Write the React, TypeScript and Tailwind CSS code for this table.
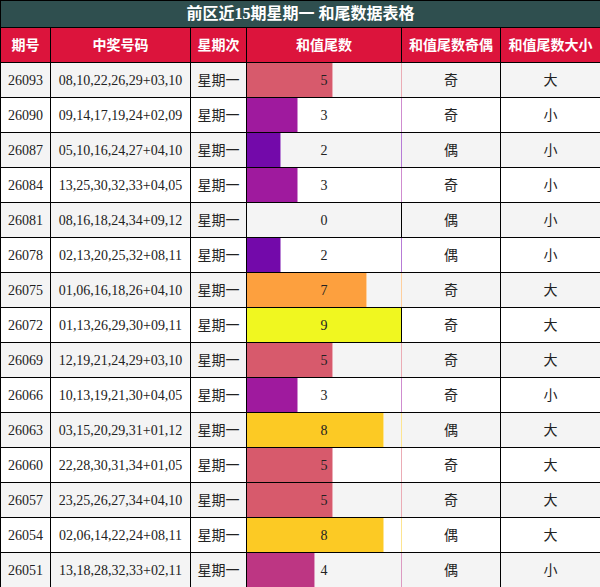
const rows = [
  { id: "26093", nums: "08,10,22,26,29+03,10", v: 5, oe: "奇", bs: "大" },
  { id: "26090", nums: "09,14,17,19,24+02,09", v: 3, oe: "奇", bs: "小" },
  { id: "26087", nums: "05,10,16,24,27+04,10", v: 2, oe: "偶", bs: "小" },
  { id: "26084", nums: "13,25,30,32,33+04,05", v: 3, oe: "奇", bs: "小" },
  { id: "26081", nums: "08,16,18,24,34+09,12", v: 0, oe: "偶", bs: "小" },
  { id: "26078", nums: "02,13,20,25,32+08,11", v: 2, oe: "偶", bs: "小" },
  { id: "26075", nums: "01,06,16,18,26+04,10", v: 7, oe: "奇", bs: "大" },
  { id: "26072", nums: "01,13,26,29,30+09,11", v: 9, oe: "奇", bs: "大" },
  { id: "26069", nums: "12,19,21,24,29+03,10", v: 5, oe: "奇", bs: "大" },
  { id: "26066", nums: "10,13,19,21,30+04,05", v: 3, oe: "奇", bs: "小" },
  { id: "26063", nums: "03,15,20,29,31+01,12", v: 8, oe: "偶", bs: "大" },
  { id: "26060", nums: "22,28,30,31,34+01,05", v: 5, oe: "奇", bs: "大" },
  { id: "26057", nums: "23,25,26,27,34+04,10", v: 5, oe: "奇", bs: "大" },
  { id: "26054", nums: "02,06,14,22,24+08,11", v: 8, oe: "偶", bs: "大" },
  { id: "26051", nums: "13,18,28,32,33+02,11", v: 4, oe: "偶", bs: "小" },
];

// bar colour and the light edge colour for each tail value
const bars: Record<number, { bar: string; edge: string }> = {
  0: { bar: "bg-transparent", edge: "border-r-black" },
  2: { bar: "bg-[#7309aa]", edge: "border-r-[#b77bd6]" },
  3: { bar: "bg-[#9f1a9e]", edge: "border-r-[#cf8ccf]" },
  4: { bar: "bg-[#bd3683]", edge: "border-r-[#dc9ac1]" },
  5: { bar: "bg-[#d75a6c]", edge: "border-r-[#ebacb5]" },
  7: { bar: "bg-[#fda03e]", edge: "border-r-[#fecf9e]" },
  8: { bar: "bg-[#fcca24]", edge: "border-r-[#fde491]" },
  9: { bar: "bg-[#f0f720]", edge: "border-r-black" },
};

const font = "font-['Liberation_Serif','Noto_Sans_CJK_SC',sans-serif]";

export default function App() {
  return (
    <div className="w-[600px] h-[587px] bg-white">
      <table className={`w-[600px] table-fixed border-collapse ${font} text-[14px] text-[#222]`}>
        <colgroup>
          <col className="w-[50px]" />
          <col className="w-[140px]" />
          <col className="w-[56px]" />
          <col className="w-[155px]" />
          <col className="w-[99px]" />
          <col className="w-[100px]" />
        </colgroup>
        <thead>
          <tr className="h-[27px]">
            <th
              colSpan={6}
              className="border border-black bg-[#2f4f4f] p-0 text-center text-[16px] font-bold text-white"
            >
              前区近15期星期一 和尾数据表格
            </th>
          </tr>
          <tr className="h-[35px] bg-[#dc143c] text-white">
            {["期号", "中奖号码", "星期次", "和值尾数", "和值尾数奇偶", "和值尾数大小"].map((h) => (
              <th key={h} className="border border-black p-0 text-center font-bold">
                {h}
              </th>
            ))}
          </tr>
        </thead>
        <tbody>
          {rows.map((r, i) => {
            const c = bars[r.v];
            return (
              <tr key={r.id} className={`h-[35px] ${i % 2 === 0 ? "bg-[#f4f4f4]" : "bg-white"}`}>
                <td className="border border-black p-0 text-center">{r.id}</td>
                <td className="border border-black p-0 text-center whitespace-nowrap">{r.nums}</td>
                <td className="border border-black p-0 text-center">星期一</td>
                <td className={`border border-black ${c.edge} p-0`}>
                  <div className="relative h-[34px]">
                    <div
                      className={`absolute inset-y-0 left-0 ${c.bar} ${r.v > 0 && r.v < 9 ? "border-r border-white/50" : ""}`}
                      style={{ width: `${(r.v / 9) * 100}%` }}
                    />
                    <div className="relative flex h-full items-center justify-center">{r.v}</div>
                  </div>
                </td>
                <td className="border border-black p-0 text-center">{r.oe}</td>
                <td className="border border-black p-0 text-center">{r.bs}</td>
              </tr>
            );
          })}
        </tbody>
      </table>
    </div>
  );
}
